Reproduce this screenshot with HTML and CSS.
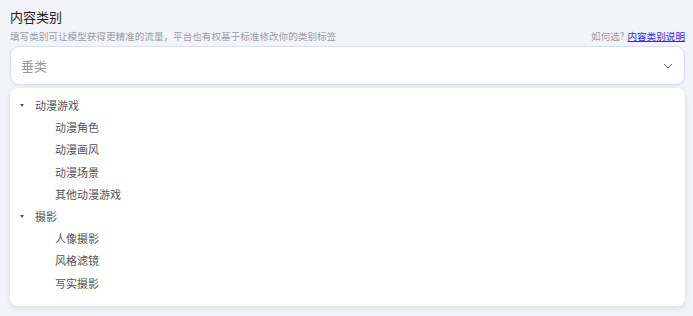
FILE: index.html
```html
<!DOCTYPE html>
<html lang="zh">
<head>
<meta charset="utf-8">
<link rel="stylesheet" href="styles.css">
</head>
<body>
<div class="field">
  <div class="label">内容类别</div>
  <div class="sub">
    <span class="hint">填写类别可让模型获得更精准的流量，平台也有权基于标准修改你的类别标签</span>
    <span class="help">如何选?<a class="link" href="#">内容类别说明</a></span>
  </div>
  <div class="select">
    <span class="placeholder">垂类</span>
    <svg class="chev" width="10" height="6" viewBox="0 0 10 6"><path d="M1 1l4 4 4-4" fill="none" stroke="#666" stroke-width="1"/></svg>
  </div>
  <div class="menu">
    <div class="group"><span class="caret"></span>动漫游戏</div>
    <div class="item">动漫角色</div>
    <div class="item">动漫画风</div>
    <div class="item">动漫场景</div>
    <div class="item">其他动漫游戏</div>
    <div class="group"><span class="caret"></span>摄影</div>
    <div class="item">人像摄影</div>
    <div class="item">风格滤镜</div>
    <div class="item">写实摄影</div>
  </div>
</div>
</body>
</html>
```
FILE: styles.css
```css
html, body { margin: 0; padding: 0; }
body {
  background: #f3f4f8;
  font-family: "Noto Sans CJK SC", "Noto Sans", sans-serif;
  width: 693px;
  height: 316px;
  overflow: hidden;
}
.field { padding: 8px 8px 0 10px; }
.label {
  font-size: 13px;
  line-height: 18px;
  color: #222;
}
.sub {
  display: flex;
  justify-content: space-between;
  align-items: center;
  margin-top: 3px;
  font-size: 9.6px;
  line-height: 14px;
}
.hint { color: #9a9ca3; }
.help { color: #9a9ca3; }
.link { color: #2a2aff; text-decoration: underline; margin-left: 3px; }
.select {
  margin-top: 3px;
  height: 39px;
  box-sizing: border-box;
  border: 1px solid #d9e0f6;
  border-radius: 9px;
  background: #fff;
  display: flex;
  align-items: center;
  justify-content: space-between;
  padding: 0 10px 0 10px;
  box-shadow: 0 1px 3px rgba(0,0,0,0.06);
}
.placeholder { font-size: 13px; color: #999; }
.chev { margin-right: 1px; }
.menu {
  margin-top: 3px;
  background: #fff;
  border-radius: 8px;
  box-shadow: 0 2px 6px rgba(0,0,0,0.1);
  padding: 6px 0 10px 0;
  height: 218px;
  box-sizing: border-box;
}
.group, .item {
  height: 22.2px;
  display: flex;
  align-items: center;
  font-size: 11px;
  color: #555;
}
.group { padding-left: 10px; }
.caret {
  width: 0; height: 0;
  border-left: 2.5px solid transparent;
  border-right: 2.5px solid transparent;
  border-top: 3px solid #555;
  margin-right: 11px;
  margin-top: 1px;
}
.item { padding-left: 45px; }
```
